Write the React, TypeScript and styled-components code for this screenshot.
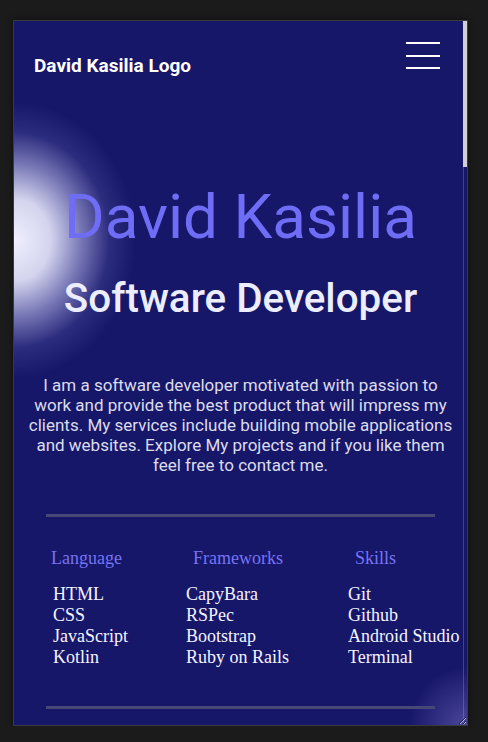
import React, { FC } from 'react'
import styled, { createGlobalStyle } from 'styled-components'

const GlobalStyle = createGlobalStyle`
  html, body {
    margin: 0;
    padding: 0;
    background: #1b1b1b;
  }
  * {
    box-sizing: border-box;
  }
`

const SFrame = styled.div`
  margin: 20px 0 0 13px;
  width: 455px;
  height: 706px;
  border: 1px solid #3a3a3a;
  display: flex;
  overflow: hidden;
  resize: both;
  background:
    radial-gradient(ellipse 122px 138px at 0 219px,
      rgba(240, 240, 255, 1) 0%,
      rgba(232, 232, 252, 0.9) 30%,
      rgba(190, 190, 238, 0.58) 55%,
      rgba(120, 120, 200, 0.22) 78%,
      rgba(40, 40, 120, 0) 100%),
    radial-gradient(circle 58px at 100% 100%,
      rgba(140, 130, 215, 0.45) 0%,
      rgba(40, 40, 120, 0) 100%),
    #17176a;
  box-shadow: 0 0 6px rgba(0, 0, 0, 0.5);
`

const SViewport = styled.div`
  flex: 1;
  min-width: 0;
`

const SScrollRail = styled.div`
  width: 4px;
  flex: none;
  border-left: 1px solid rgba(150, 150, 220, 0.35);
`

const SScrollThumb = styled.div`
  height: 146px;
  margin-left: -1px;
  background: #cfcfd4;
`

const SHeader = styled.header`
  display: flex;
  justify-content: space-between;
  align-items: flex-start;
  padding: 21px 23px 0 20px;
`

const SLogo = styled.div`
  margin-top: 13px;
  font-family: Roboto, 'Liberation Sans', sans-serif;
  font-weight: 700;
  font-size: 19px;
  line-height: 22px;
  color: #ffffff;
`

const SHamburger = styled.button`
  width: 34px;
  height: 27px;
  padding: 0;
  border: 0;
  background: none;
  display: flex;
  flex-direction: column;
  justify-content: space-between;
  span {
    display: block;
    height: 2px;
    background: #ffffff;
  }
`

const SMain = styled.main`
  padding: 0 12px 0 16px;
  text-align: center;
  font-family: Roboto, 'Liberation Sans', sans-serif;
`

const STitle = styled.h1`
  margin: 104px 0 0;
  font-size: 62px;
  line-height: 72px;
  font-weight: 400;
  color: #6f6cf6;
`

const SSubtitle = styled.h2`
  margin: 21px 0 0;
  font-size: 40.4px;
  line-height: 50px;
  font-weight: 500;
  color: #eceeff;
`

const SAbout = styled.p`
  margin: 51px -4px 0;
  font-size: 17px;
  line-height: 20px;
  color: #dcdcea;
`

const SRule = styled.hr<{ $top: number }>`
  margin: ${({ $top }) => $top}px 16px 0;
  border: 0;
  height: 3px;
  background: #474877;
`

const SSkills = styled.section`
  display: grid;
  grid-template-columns: 133px 162px 1fr;
  padding: 31px 0 0 23px;
  font-family: 'Liberation Serif', 'Times New Roman', serif;
  font-size: 18px;
  line-height: 21px;
  text-align: left;
`

const SColumnTitle = styled.h3<{ $indent: number }>`
  margin: 0 0 15px ${({ $indent }) => $indent}px;
  font-size: 18px;
  line-height: 21px;
  font-weight: 400;
  color: #7674f2;
`

const SList = styled.ul`
  margin: 0;
  padding: 0;
  list-style: none;
  color: #f4f4ff;
  white-space: nowrap;
`

const columns = [
  { title: 'Language', indent: -2, items: ['HTML', 'CSS', 'JavaScript', 'Kotlin'] },
  { title: 'Frameworks', indent: 7, items: ['CapyBara', 'RSPec', 'Bootstrap', 'Ruby on Rails'] },
  { title: 'Skills', indent: 7, items: ['Git', 'Github', 'Android Studio', 'Terminal'] },
]

const App: FC = () => (
  <>
    <GlobalStyle />
    <SFrame>
      <SViewport>
        <SHeader>
          <SLogo>David Kasilia Logo</SLogo>
          <SHamburger aria-label="menu">
            <span />
            <span />
            <span />
          </SHamburger>
        </SHeader>
        <SMain>
          <STitle>David Kasilia</STitle>
          <SSubtitle>Software Developer</SSubtitle>
          <SAbout>
            I am a software developer motivated with passion to work and provide the best product
            that will impress my clients. My services include building mobile applications and
            websites. Explore My projects and if you like them feel free to contact me.
          </SAbout>
          <SRule $top={39} />
          <SSkills>
            {columns.map((col) => (
              <div key={col.title}>
                <SColumnTitle $indent={col.indent}>{col.title}</SColumnTitle>
                <SList>
                  {col.items.map((item) => (
                    <li key={item}>{item}</li>
                  ))}
                </SList>
              </div>
            ))}
          </SSkills>
          <SRule $top={38} />
        </SMain>
      </SViewport>
      <SScrollRail>
        <SScrollThumb />
      </SScrollRail>
    </SFrame>
  </>
)

export default App
